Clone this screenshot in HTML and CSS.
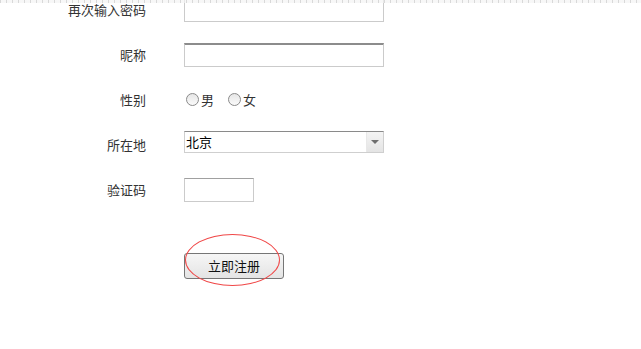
FILE: index.html
```html
<!DOCTYPE html>
<html lang="zh">

<head>
    <title>注册</title>
    <meta charset="UTF-8">
    <link rel="stylesheet" href="styles.css">
</head>

<body>
    <div class="ruler"></div>
    <form class="reg">
        <div class="row">
            <label>再次输入密码</label>
            <input class="txt" type="password">
        </div>
        <div class="row">
            <label>昵称</label>
            <input class="txt dark" type="text">
        </div>
        <div class="row">
            <label>性别</label>
            <span class="sex">
                <span class="radio"></span>男
                <span class="radio gap"></span>女
            </span>
        </div>
        <div class="row">
            <label>所在地</label>
            <div class="select">
                <span class="val">北京</span>
                <span class="arrow"></span>
            </div>
        </div>
        <div class="row">
            <label>验证码</label>
            <input class="txt code" type="text">
        </div>
        <div class="row btnrow">
            <label></label>
            <div class="btnwrap">
                <button type="button" class="btn">立即注册</button>
                <span class="ring"></span>
            </div>
        </div>
    </form>
</body>

</html>
```

FILE: styles.css
```css
body {
    margin: 0;
    color: #333;
    font-family: "Microsoft Yahei", "Noto Sans CJK SC", sans-serif;
    font-size: 13px;
    background: #fff;
    overflow: hidden;
}

.ruler {
    position: absolute;
    top: 0;
    left: 0;
    right: 0;
    height: 3px;
    background: repeating-linear-gradient(90deg, #c8c8c8 0, #c8c8c8 1px, #f4f4f4 1px, #f4f4f4 6px);
    opacity: .7;
}

.reg {
    margin-top: -13px;
}

.row {
    display: flex;
    align-items: center;
    height: 45px;
}

.row label {
    width: 146px;
    margin-right: 38px;
    text-align: right;
}

.txt {
    box-sizing: border-box;
    width: 200px;
    height: 24px;
    margin: 0;
    border: 1px solid #cbcbcb;
    padding: 0 3px;
    font: inherit;
}

.txt.dark {
    border-top: 2px solid #8c8c8c;
}

.txt.code {
    width: 70px;
    border-top-color: #a0a0a0;
}

.sex {
    display: flex;
    align-items: center;
}

.radio {
    box-sizing: border-box;
    width: 13px;
    height: 13px;
    margin: 0 2px 0 2px;
    border: 1px solid #8a8a8a;
    border-radius: 50%;
    background: linear-gradient(#e6e6e6, #fafafa);
}

.radio.gap {
    margin-left: 14px;
}

.select {
    box-sizing: border-box;
    display: flex;
    width: 200px;
    height: 22px;
    margin-top: -6px;
    border: 1px solid #cfcfcf;
    border-top-color: #8a8a8a;
    color: #000;
}

.val {
    flex: 1;
    line-height: 19px;
    padding-left: 1px;
}

.arrow {
    width: 16px;
    background: linear-gradient(#f4f4f4, #e4e4e4);
    border-left: 1px solid #e8e8e8;
    display: flex;
    align-items: center;
    justify-content: center;
}

.arrow::after {
    content: "";
    border-left: 4px solid transparent;
    border-right: 4px solid transparent;
    border-top: 4px solid #6e6e6e;
}

.btnrow {
    margin-top: 31px;
}

.btnwrap {
    position: relative;
}

.btn {
    display: block;
    width: 100px;
    height: 26px;
    margin: 0;
    border: 1px solid #767676;
    border-radius: 3px;
    background: linear-gradient(#f6f6f6, #e4e4e4);
    color: #111;
    font: inherit;
    font-size: 13px;
    padding: 0;
}

.ring {
    position: absolute;
    left: 1px;
    top: -19px;
    width: 95px;
    height: 52px;
    border: 1px solid #f04848;
    border-radius: 50%;
    box-sizing: border-box;
}
```
